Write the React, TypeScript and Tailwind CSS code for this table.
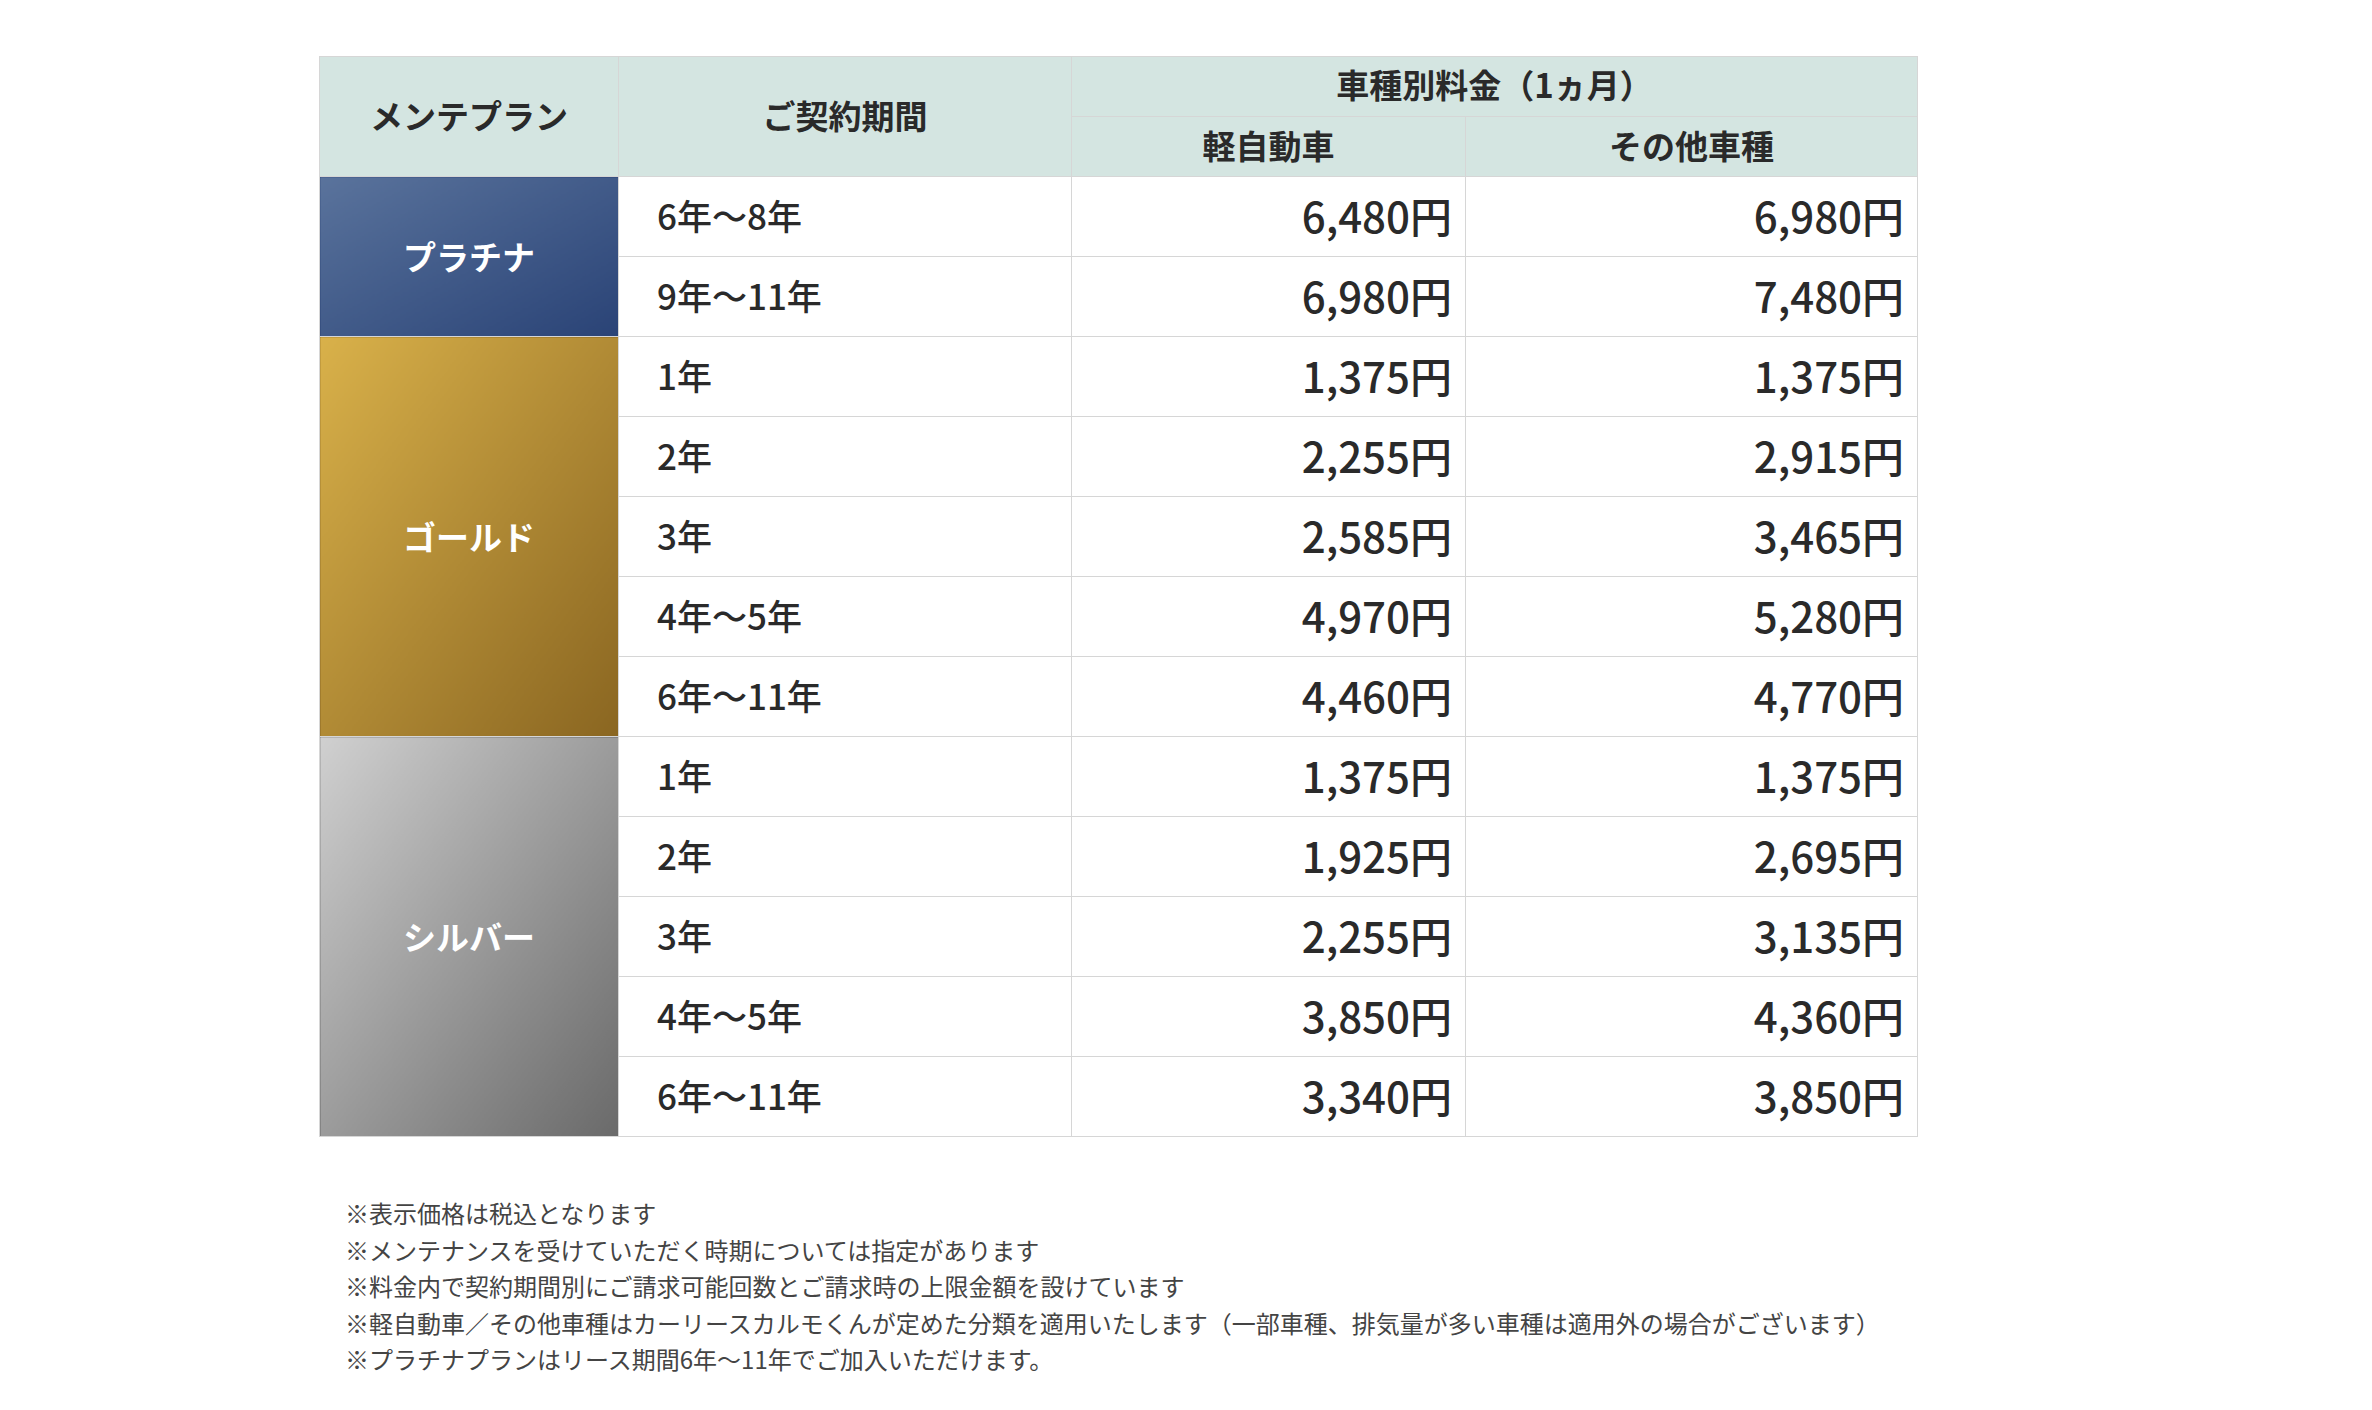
import React from 'react';

type Row = { period: string; kei: string; other: string };
type Plan = { name: string; bg: string; rows: Row[] };

const plans: Plan[] = [
  {
    name: 'プラチナ',
    bg: 'bg-gradient-to-br from-[#5a739c] to-[#2a4376]',
    rows: [
      { period: '6年〜8年', kei: '6,480円', other: '6,980円' },
      { period: '9年〜11年', kei: '6,980円', other: '7,480円' },
    ],
  },
  {
    name: 'ゴールド',
    bg: 'bg-gradient-to-br from-[#d9b14a] to-[#8a6621]',
    rows: [
      { period: '1年', kei: '1,375円', other: '1,375円' },
      { period: '2年', kei: '2,255円', other: '2,915円' },
      { period: '3年', kei: '2,585円', other: '3,465円' },
      { period: '4年〜5年', kei: '4,970円', other: '5,280円' },
      { period: '6年〜11年', kei: '4,460円', other: '4,770円' },
    ],
  },
  {
    name: 'シルバー',
    bg: 'bg-gradient-to-br from-[#d0d0d0] to-[#6a6a6a]',
    rows: [
      { period: '1年', kei: '1,375円', other: '1,375円' },
      { period: '2年', kei: '1,925円', other: '2,695円' },
      { period: '3年', kei: '2,255円', other: '3,135円' },
      { period: '4年〜5年', kei: '3,850円', other: '4,360円' },
      { period: '6年〜11年', kei: '3,340円', other: '3,850円' },
    ],
  },
];

const notes = [
  '※表示価格は税込となります',
  '※メンテナンスを受けていただく時期については指定があります',
  '※料金内で契約期間別にご請求可能回数とご請求時の上限金額を設けています',
  '※軽自動車／その他車種はカーリースカルモくんが定めた分類を適用いたします（一部車種、排気量が多い車種は適用外の場合がございます）',
  '※プラチナプランはリース期間6年〜11年でご加入いただけます。',
];

const App: React.FC = () => {
  return (
    <div className="min-h-[1410px] bg-white pt-[56px] pl-[319px] font-['Noto_Sans_CJK_JP','Noto_Sans',sans-serif] text-[#2a2a2a]">
      <table className="w-[1598px] table-fixed border-collapse border border-[#d6d6d6]">
        <colgroup>
          <col className="w-[299px]" />
          <col className="w-[453px]" />
          <col className="w-[394px]" />
          <col className="w-[452px]" />
        </colgroup>
        <thead>
          <tr className="h-[60px] bg-[#d4e5e1]">
            <th rowSpan={2} className="border border-[#d6d6d6] pb-[2px] text-[33px] font-bold">
              メンテプラン
            </th>
            <th rowSpan={2} className="border border-[#d6d6d6] pb-[2px] text-[33px] font-bold">
              ご契約期間
            </th>
            <th colSpan={2} className="border border-[#d6d6d6] pb-[3px] text-[33px] font-bold">
              車種別料金（1ヵ月）
            </th>
          </tr>
          <tr className="h-[60px] bg-[#d4e5e1]">
            <th className="border border-[#d6d6d6] pb-[2px] text-[33px] font-bold">軽自動車</th>
            <th className="border border-[#d6d6d6] pb-[2px] text-[33px] font-bold">その他車種</th>
          </tr>
        </thead>
        <tbody>
          {plans.map((plan) =>
            plan.rows.map((row, i) => (
              <tr key={plan.name + row.period} className="h-[80px]">
                {i === 0 && (
                  <td
                    rowSpan={plan.rows.length}
                    className={`${plan.bg} border border-[#d6d6d6] text-center text-[33px] font-bold text-white`}
                  >
                    {plan.name}
                  </td>
                )}
                <td className="border border-[#d6d6d6] pb-[2px] pl-[38px] text-[35px] font-medium">{row.period}</td>
                <td className="border border-[#d6d6d6] pb-[5px] pr-[13px] text-right text-[42px] font-medium">{row.kei}</td>
                <td className="border border-[#d6d6d6] pb-[5px] pr-[13px] text-right text-[42px] font-medium">{row.other}</td>
              </tr>
            ))
          )}
        </tbody>
      </table>

      <ul className="mt-[58px] pl-[26px] text-[24px] leading-[36.5px] text-[#444]">
        {notes.map((n) => (
          <li key={n}>{n}</li>
        ))}
      </ul>
    </div>
  );
};

export default App;
